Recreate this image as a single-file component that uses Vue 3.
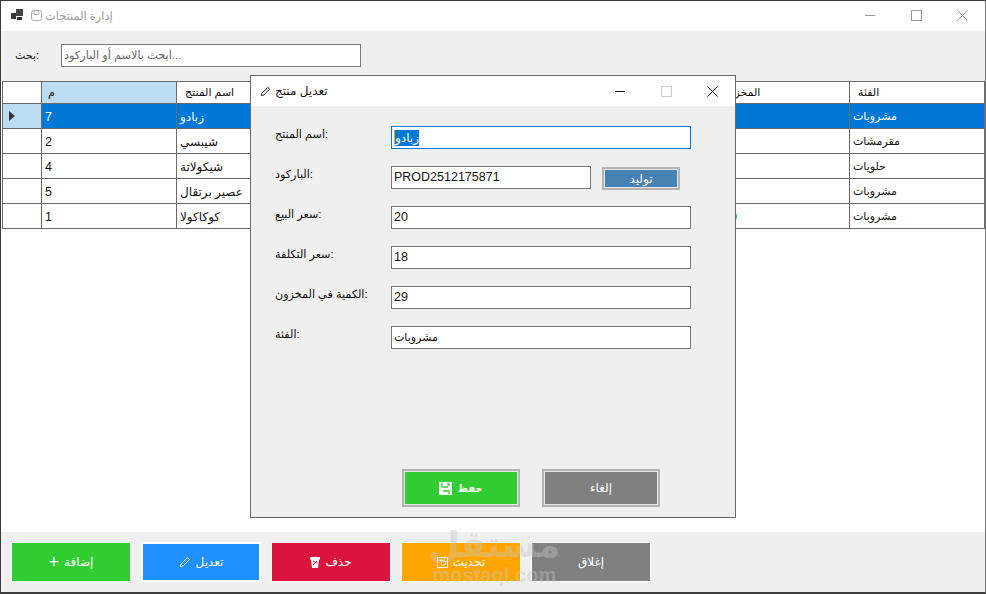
<script setup>
const columns = [
  { label: 'م', cls: 'c-id' },
  { label: 'اسم المنتج', cls: 'c-name' },
  { label: 'الباركود', cls: 'c-code' },
  { label: 'السعر', cls: 'c-price' },
  { label: 'المخزون', cls: 'c-stock' },
  { label: 'الفئة', cls: 'c-cat' }
]
const rows = [
  { id: 7, name: 'زبادو', code: 'PROD2512175871', price: 20, stock: 29, cat: 'مشروبات', selected: true },
  { id: 2, name: 'شيبسي', code: 'PROD2512175872', price: 10, stock: 40, cat: 'مقرمشات' },
  { id: 4, name: 'شيكولاتة', code: 'PROD2512175874', price: 15, stock: 25, cat: 'حلويات' },
  { id: 5, name: 'عصير برتقال', code: 'PROD2512175875', price: 12, stock: 30, cat: 'مشروبات' },
  { id: 1, name: 'كوكاكولا', code: 'PROD2512175871', price: 18, stock: 100, cat: 'مشروبات' }
]
const fields = [
  { label: 'اسم المنتج:', value: 'زبادو', focus: true },
  { label: 'الباركود:', value: 'PROD2512175871', gen: true, num: true },
  { label: 'سعر البيع:', value: '20', num: true },
  { label: 'سعر التكلفة:', value: '18', num: true },
  { label: 'الكمية في المخزون:', value: '29', num: true },
  { label: 'الفئة:', value: 'مشروبات' }
]
</script>

<template>
  <div class="window">
    <header class="titlebar">
      <svg class="app-icon" width="13" height="12" viewBox="0 0 13 12">
        <rect x="0" y="4" width="5" height="6" fill="#3a3a3a" />
        <rect x="5" y="0" width="7" height="7" fill="#444" />
        <rect x="6" y="8" width="5" height="3" fill="#333" />
      </svg>
      <svg class="pack-icon" width="11" height="11" viewBox="0 0 11 11" fill="none" stroke="#aaa">
        <rect x=".5" y=".5" width="10" height="10" rx="2" />
        <path d="M3 .5v4h5M6.500 .5l2 3" />
      </svg>
      <span class="title">إدارة المنتجات</span>
      <div class="controls">
        <span class="ctl"><i class="min"></i></span>
        <span class="ctl"><i class="max"></i></span>
        <span class="ctl">
          <svg width="11" height="11" viewBox="0 0 11 11" stroke="#999" fill="none"><path d="M.5.5l10 10M10.5.5l-10 10" /></svg>
        </span>
      </div>
    </header>

    <section class="searchbar">
      <label class="search-label">بحث:</label>
      <div class="search-input">ابحث بالاسم أو الباركود...</div>
    </section>

    <main class="grid-area">
      <table class="grid">
        <thead>
          <tr>
            <th class="c-head"></th>
            <th v-for="c in columns" :key="c.label" :class="[c.cls, { active: c.cls === 'c-id' }]">{{ c.label }}</th>
          </tr>
        </thead>
        <tbody>
          <tr v-for="r in rows" :key="r.id" :class="{ selected: r.selected }">
            <td class="c-head"><span v-if="r.selected" class="arrow"></span></td>
            <td class="num">{{ r.id }}</td>
            <td class="name">{{ r.name }}</td>
            <td class="num">{{ r.code }}</td>
            <td class="num">{{ r.price }}</td>
            <td class="num">{{ r.stock }}</td>
            <td>{{ r.cat }}</td>
          </tr>
        </tbody>
      </table>
    </main>

    <footer class="footer">
      <button class="btn green"><span class="plus">+</span> إضافة</button>
      <button class="btn blue thick">
        <svg width="12" height="12" viewBox="0 0 12 12" fill="none" stroke="#fff"><path d="M1.5 10.5l.6-2.6L8.5 1.5l2 2-6.4 6.4z" /></svg>
        تعديل
      </button>
      <button class="btn red">
        <svg width="10" height="11" viewBox="0 0 10 11"><path d="M0 0h10v2.500H9L8 11H2L1 2.500H0z" fill="#fff" /><path d="M3 4l4 2M7 4L3 8" stroke="#dc143c" /></svg>
        حذف
      </button>
      <button class="btn orange">
        <svg width="11" height="11" viewBox="0 0 11 11" fill="none" stroke="#fff"><rect x=".5" y=".5" width="10" height="10" /><path d="M3 3.500h3.500a2 2 0 0 1 0 4.500H4M3 3.500L4.500 2M3 3.500L4.500 5" /></svg>
        تحديث
      </button>
      <button class="btn gray">إغلاق</button>
    </footer>

    <div class="watermark">
      <span class="wm-ar">مستقل</span>
      <span class="wm-en">mostaql.com</span>
    </div>

    <section class="dialog">
      <header class="dlg-title">
        <svg width="11" height="11" viewBox="0 0 12 12" fill="none" stroke="#111"><path d="M1.500 10.500l.6-2.600L8.500 1.500l2 2-6.400 6.400z" /></svg>
        <span>تعديل منتج</span>
        <div class="dlg-controls">
          <span class="dctl"><i class="dmin"></i></span>
          <span class="dctl"><i class="dmax"></i></span>
          <span class="dctl">
            <svg width="11" height="11" viewBox="0 0 11 11" stroke="#111" fill="none"><path d="M.5.5l10 10M10.5.5l-10 10" /></svg>
          </span>
        </div>
      </header>
      <div class="form">
        <div v-for="f in fields" :key="f.label" class="row">
          <label class="lbl">{{ f.label }}</label>
          <div class="inp" :class="{ focus: f.focus, short: f.gen, num: f.num }">
            <span v-if="f.focus" class="sel">{{ f.value }}</span>
            <template v-else>{{ f.value }}</template>
          </div>
          <button v-if="f.gen" class="gen">توليد</button>
        </div>
      </div>
      <div class="dlg-actions">
        <button class="act green">
          <svg width="13" height="13" viewBox="0 0 13 13"><path d="M0 0h13v13H0z" fill="#fff" /><path d="M3 1v4h6M8 2h2v2M4 9h6v3" fill="none" stroke="#32cd32" stroke-width="1.300" /></svg>
          <b>حفظ</b>
        </button>
        <button class="act gray">إلغاء</button>
      </div>
    </section>
  </div>
</template>

<style scoped>
.window {
  position: relative;
  width: 986px;
  height: 594px;
  box-sizing: border-box;
  display: flex;
  flex-direction: column;
  border: 1px solid #3c3c3c;
  border-bottom-width: 2px;
  border-right-color: #777;
  background: #fff;
  overflow: hidden;
  font: 11px "Liberation Sans", "DejaVu Sans", sans-serif;
  color: #111;
}
.num { font-size: 12.5px; }
.titlebar {
  height: 30px;
  flex: none;
  display: flex;
  align-items: center;
  background: #fff;
  padding-left: 10px;
}
.app-icon { margin-top: -2px; }
.pack-icon { margin-left: 7px; margin-top: -1px; }
.title { margin-left: 3px; color: #a0a0a0; font-size: 11.4px; margin-top: -1px; }
.controls { margin-left: auto; display: flex; }
.ctl {
  width: 46px;
  height: 30px;
  display: flex;
  align-items: center;
  justify-content: center;
  margin-top: -1px;
}
.min { display: block; width: 10px; height: 1px; background: #999; }
.max { display: block; width: 9px; height: 9px; border: 1px solid #999; }

.searchbar {
  height: 50px;
  flex: none;
  display: flex;
  align-items: center;
  background: #efefef;
  box-sizing: border-box;
  padding: 0 0 2px 14px;
}
.search-label { width: 46px; }
.search-input {
  width: 300px;
  height: 23px;
  box-sizing: border-box;
  border: 1px solid #7a7a7a;
  background: #fff;
  padding: 0 2px;
  line-height: 21px;
  font-size: 11.3px;
  color: #666;
}

.grid-area { flex: 1; background: #fff; padding-left: 1px; }
.grid {
  border-collapse: collapse;
  table-layout: fixed;
  width: 983px;
  border: 1px solid #696969;
}
.grid th, .grid td {
  border: 1px solid #696969;
  padding: 1px 3px 0;
  text-align: left;
  font-weight: 400;
  white-space: nowrap;
  overflow: hidden;
  height: 25px;
  box-sizing: border-box;
}
.grid td.name { font-size: 12px; }
.grid thead th { height: 22px; padding: 0 0 0 8px; border-top: 0; font-size: 11px; }
.grid thead th.active { background: #bcdcf4; padding-left: 6px; }
.grid .c-head { width: 39px; padding: 0; }
.c-id { width: 135px; }
.c-name { width: 120px; }
.c-code { width: 230px; }
.c-price { width: 186px; }
.c-stock { width: 137px; }
.selected td { background: #0078d7; color: #fff; }
.grid .selected td.c-head { background: #bcdcf4; padding-left: 6px; }
.arrow {
  display: block;
  width: 0;
  height: 0;
  border: 5px solid transparent;
  border-left: 6px solid #333;
  border-right: 0;
}

.footer {
  height: 60px;
  flex: none;
  display: flex;
  align-items: center;
  gap: 10px;
  padding-left: 10px;
  background: #efefef;
}
.btn {
  width: 120px;
  height: 40px;
  box-sizing: border-box;
  border: 1px solid #fff;
  color: #fff;
  font: 12px "Liberation Sans", "DejaVu Sans", sans-serif;
  display: flex;
  align-items: center;
  justify-content: center;
  gap: 5px;
  padding: 0;
}
.thick { border-width: 2px; }
.plus { font-size: 18px; line-height: 1; }
.green { background: #32cd32; }
.blue { background: #1e90ff; }
.red { background: #dc143c; }
.orange { background: #ffa500; }
.gray { background: #808080; }

.watermark {
  position: absolute;
  left: 426px;
  top: 522px;
  width: 135px;
  display: flex;
  flex-direction: column;
  align-items: center;
  color: rgba(197, 197, 197, 0.42);
  pointer-events: none;
}
.wm-ar { font: 700 36px/44px "DejaVu Sans", sans-serif; }
.wm-en { font: 700 20px/16px "Liberation Sans", sans-serif; }

.dialog {
  position: absolute;
  left: 249px;
  top: 74px;
  width: 486px;
  height: 443px;
  box-sizing: border-box;
  border: 1px solid #696969;
  background: #efefef;
  display: flex;
  flex-direction: column;
}
.dlg-title {
  height: 30px;
  flex: none;
  background: #fff;
  display: flex;
  align-items: center;
  gap: 4px;
  padding-left: 9px;
  font-size: 12px;
}
.dlg-controls { margin-left: auto; display: flex; }
.dctl {
  width: 46px;
  height: 30px;
  display: flex;
  align-items: center;
  justify-content: center;
}
.dmin { display: block; width: 10px; height: 1px; background: #111; }
.dmax { display: block; width: 9px; height: 9px; border: 1px solid #ccc; }

.form { padding: 20px 0 0 24px; }
.row {
  height: 40px;
  display: flex;
  align-items: flex-start;
}
.lbl { width: 116px; line-height: 16px; font-size: 11.2px; }
.inp {
  width: 300px;
  height: 23px;
  box-sizing: border-box;
  border: 1px solid #7a7a7a;
  background: #fff;
  padding: 0 2px;
  line-height: 21px;
}
.inp.short { width: 200px; }
.inp.focus { border-color: #0078d7; }
.sel { background: #0078d7; color: #fff; display: inline-block; line-height: 16px; font-size: 12px; border-left: 1px solid #ffa500; vertical-align: middle; }
.gen {
  width: 78px;
  height: 23px;
  margin: 1px 0 0 11px;
  box-sizing: border-box;
  border: 2px solid #b4b4b4;
  box-shadow: inset 0 0 0 1px #e8e8e8;
  background: #4682b4;
  color: #fff;
  font: 12px "Liberation Sans", "DejaVu Sans", sans-serif;
  padding: 0;
}
.dlg-actions {
  margin-top: auto;
  display: flex;
  gap: 22px;
  padding: 0 0 10px 151px;
}
.act {
  width: 118px;
  height: 38px;
  box-sizing: border-box;
  border: 2px solid #b4b4b4;
  box-shadow: inset 0 0 0 1px #e8e8e8;
  color: #fff;
  font: 12px "Liberation Sans", "DejaVu Sans", sans-serif;
  display: flex;
  align-items: center;
  justify-content: center;
  gap: 5px;
  padding: 0;
}
.act b { font-weight: 700; font-size: 10px; }
</style>
